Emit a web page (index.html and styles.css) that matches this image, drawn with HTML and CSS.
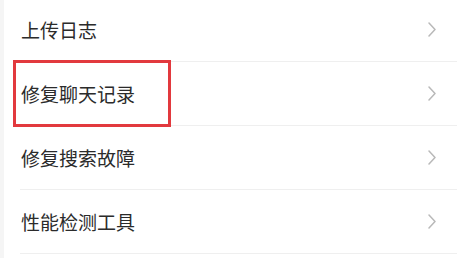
FILE: index.html
```html
<!DOCTYPE html>
<html lang="zh-CN">
<head>
<meta charset="utf-8">
<title>设置</title>
<link rel="stylesheet" href="styles.css">
</head>
<body>
<div class="list">
  <div class="row">
    <span class="label">上传日志</span>
    <svg class="chev" viewBox="0 0 8 15" width="8" height="15"><path d="M1 1 L7 7.5 L1 14" fill="none" stroke="#b9b9b9" stroke-width="1.5" stroke-linecap="round" stroke-linejoin="round"/></svg>
  </div>
  <div class="row">
    <span class="label">修复聊天记录</span>
    <svg class="chev" viewBox="0 0 8 15" width="8" height="15"><path d="M1 1 L7 7.5 L1 14" fill="none" stroke="#b9b9b9" stroke-width="1.5" stroke-linecap="round" stroke-linejoin="round"/></svg>
  </div>
  <div class="row">
    <span class="label">修复搜索故障</span>
    <svg class="chev" viewBox="0 0 8 15" width="8" height="15"><path d="M1 1 L7 7.5 L1 14" fill="none" stroke="#b9b9b9" stroke-width="1.5" stroke-linecap="round" stroke-linejoin="round"/></svg>
  </div>
  <div class="row">
    <span class="label">性能检测工具</span>
    <svg class="chev" viewBox="0 0 8 15" width="8" height="15"><path d="M1 1 L7 7.5 L1 14" fill="none" stroke="#b9b9b9" stroke-width="1.5" stroke-linecap="round" stroke-linejoin="round"/></svg>
  </div>
  <div class="highlight"></div>
</div>
</body>
</html>
```

FILE: styles.css
```css
html, body {
  margin: 0;
  padding: 0;
}
body {
  background: #f5f5f5;
  font-family: "Noto Sans CJK SC", "Noto Sans", sans-serif;
  overflow: hidden;
  width: 457px;
  height: 258px;
}
.list {
  position: relative;
  margin-left: 4px;
  margin-top: -2px;
  background: #ffffff;
  height: 262px;
}
.row {
  display: flex;
  align-items: center;
  justify-content: space-between;
  height: 63px;
  margin-left: 16px;
  padding-left: 1px;
  padding-right: 21px;
  border-bottom: 1px solid #efefef;
}
.label {
  font-size: 19px;
  color: #2b2b2b;
  line-height: 1;
}
.chev {
  display: block;
}
.highlight {
  position: absolute;
  left: 9px;
  top: 62px;
  width: 152px;
  height: 61px;
  border: 3px solid #e2393e;
}
```
